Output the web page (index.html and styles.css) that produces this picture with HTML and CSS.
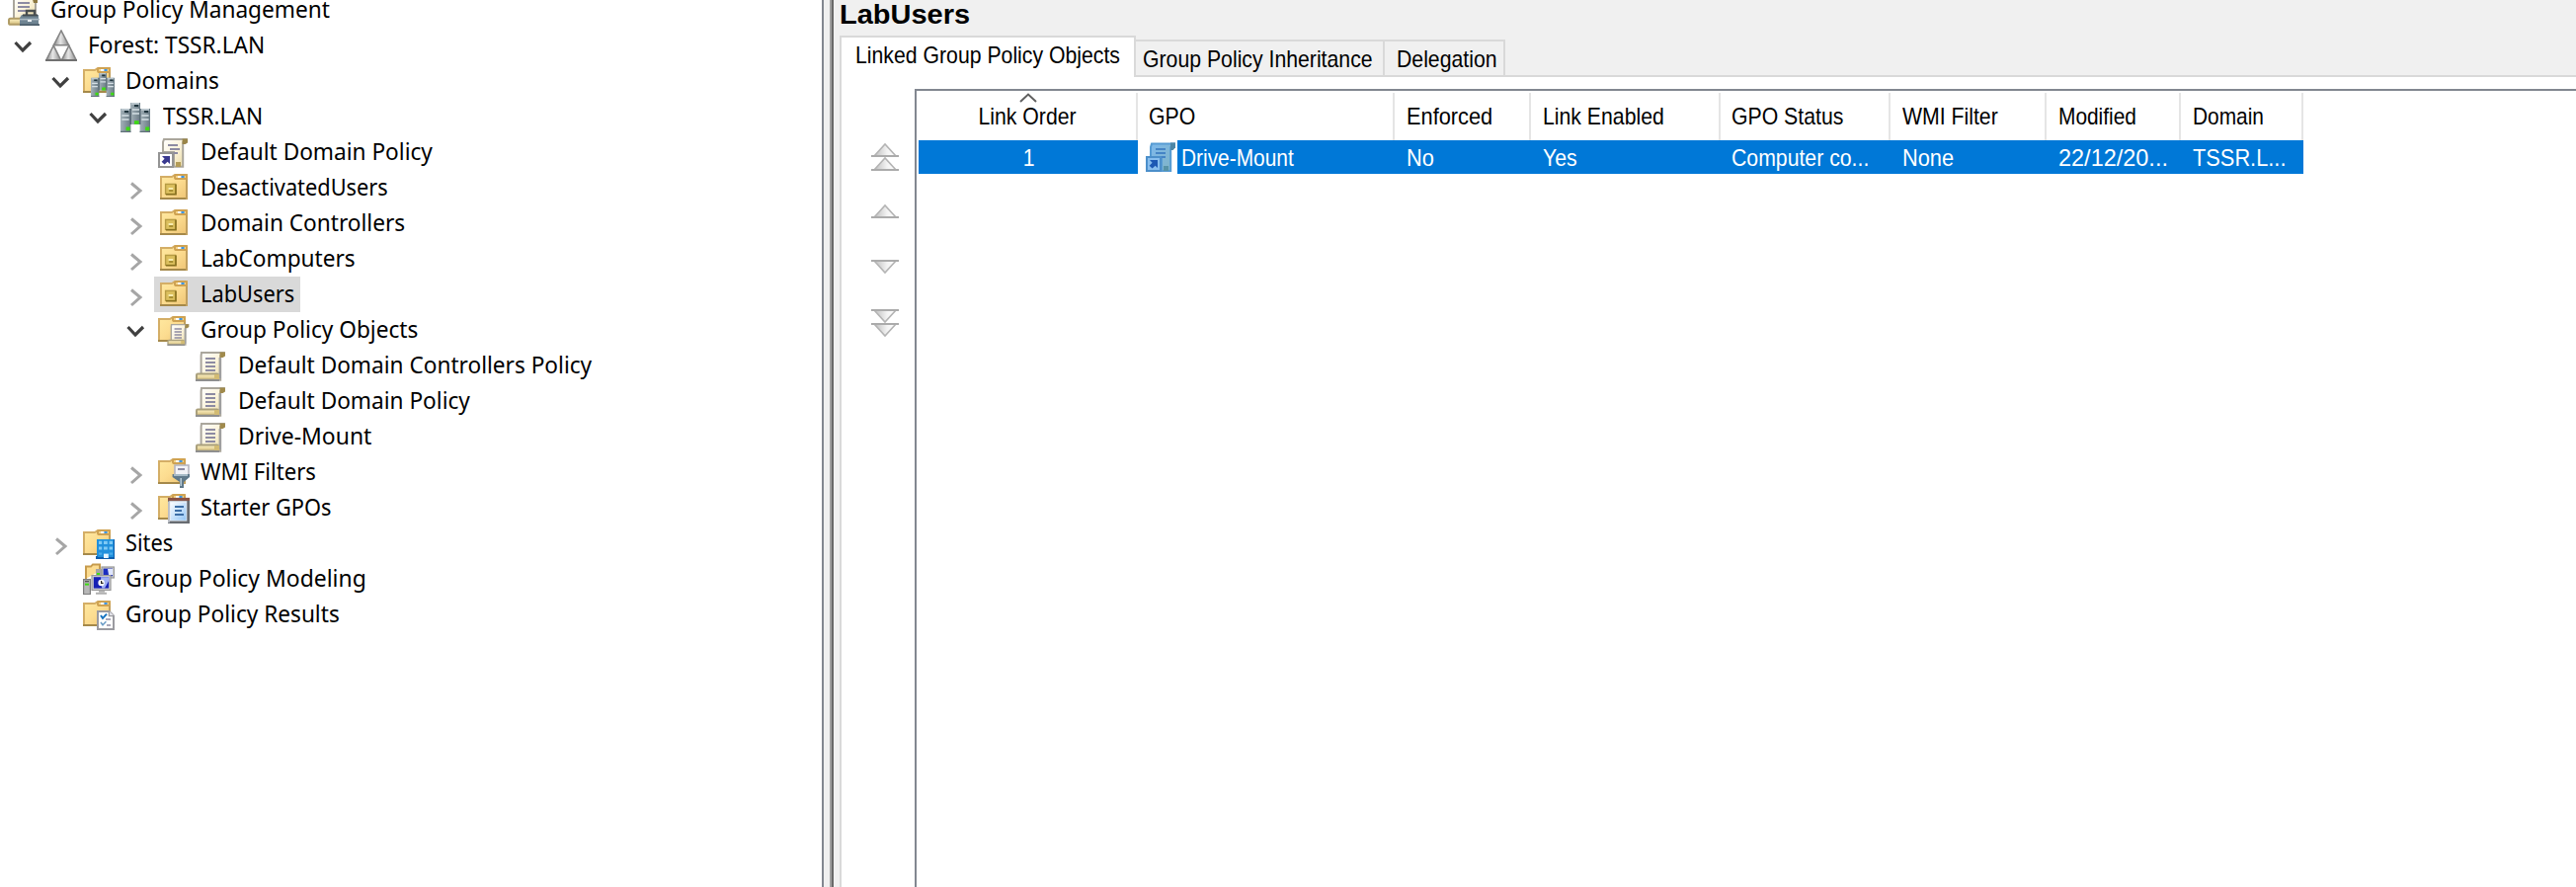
FILE: index.html
```
<!DOCTYPE html>
<html lang="en">
<head>
<meta charset="utf-8">
<title>Group Policy Management</title>
<link rel="stylesheet" href="styles.css">
</head>
<body>
<svg class="defs" width="0" height="0" aria-hidden="true">
  <defs>
    <linearGradient id="g-folder" x1="0" y1="0" x2="1" y2="1"><stop offset="0" stop-color="#ffe9a0"/><stop offset=".5" stop-color="#fcdc90"/><stop offset="1" stop-color="#eec474"/></linearGradient>
    <linearGradient id="g-paper" x1="0" y1="0" x2="1" y2="1"><stop offset="0" stop-color="#ffffff"/><stop offset=".5" stop-color="#fbf3da"/><stop offset="1" stop-color="#e8d8a0"/></linearGradient>
    <linearGradient id="g-roll" x1="0" y1="0" x2="0" y2="1"><stop offset="0" stop-color="#fff3c4"/><stop offset="1" stop-color="#d3bd7c"/></linearGradient>
    <linearGradient id="g-server" x1="0" y1="0" x2="1" y2="0"><stop offset="0" stop-color="#a3b1b8"/><stop offset="1" stop-color="#697a84"/></linearGradient>
    <linearGradient id="g-tri" x1="0" y1="0" x2="1" y2="0"><stop offset="0" stop-color="#858585"/><stop offset=".45" stop-color="#e6e6e6"/><stop offset="1" stop-color="#8c8c8c"/></linearGradient>
    <linearGradient id="g-btn" x1="0" y1="0" x2="1" y2="0"><stop offset="0" stop-color="#bdbdbd"/><stop offset=".6" stop-color="#f3f3f3"/><stop offset="1" stop-color="#ffffff"/></linearGradient>
    <linearGradient id="g-blue" x1="0" y1="0" x2="1" y2="1"><stop offset="0" stop-color="#7db8ec"/><stop offset="1" stop-color="#80b4c4"/></linearGradient>
    <linearGradient id="g-page" x1="0" y1="0" x2="1" y2="1"><stop offset="0" stop-color="#ffffff"/><stop offset="1" stop-color="#8fc3f5"/></linearGradient>

    <symbol id="folder" viewBox="0 0 16 16">
      <path d="M.5 2.5H6L7.5 1.5H13.5V13.5H.5Z" fill="url(#g-folder)" stroke="#d4ae66"/>
      <path d="M0 13.5H14" stroke="#a5894a"/>
      <path d="M13.5 3V14" stroke="#c09f5e"/>
      <rect x="7.5" y="1.5" width="6" height="2" rx=".8" fill="#f5d58a" stroke="#cfa252"/>
      <path d="M9 2.5H11" stroke="#fff"/><path d="M10.7 2.5H12.3" stroke="#3e96e4"/>
    </symbol>
    <symbol id="scroll" viewBox="0 0 16 16">
      <path d="M3 1.5H14L12.6 3V15.4H2.8V12L2.8 3Z" fill="url(#g-paper)" stroke="#aaa69c"/>
      <path d="M12.4 4V14.5" stroke="#9f9f9f" stroke-width="1.2"/>
      <path d="M12.3 1.2H15V3.2L13.8 4H12.3Z" fill="#a08a4c"/>
      <path d="M5 4.5H10M5 6.5H10M5 8.5H10M5 10.5H10" stroke="#8d8ba2"/>
      <rect x=".5" y="12.3" width="11" height="3" rx=".6" fill="url(#g-roll)" stroke="#aaa07c"/>
      <path d="M9.5 12.5V15H12V12.5Z" fill="#d2bb73"/>
      <path d="M0 15.5H12" stroke="#8f8f8f"/>
    </symbol>
    <symbol id="servers" viewBox="0 0 16 16">
      <rect x="5" y="1" width="5" height="11" fill="url(#g-server)"/>
      <rect x="0" y="4" width="5.2" height="12" fill="url(#g-server)"/>
      <rect x="9.8" y="4" width="5.2" height="12" fill="url(#g-server)"/>
      <path d="M5.5 1.5H9.5M.5 4.5H4.5M10.5 4.5H14.5" stroke="#b9c5cc"/>
      <path d="M7 2.5H9M2 5.5H4M12 5.5H14" stroke="#1f343d"/>
      <path d="M6 4.5H9.5M6 6.5H9.5M.7 7.5H4.3M.7 9.5H4.3M10.7 7.5H14.3M10.7 9.5H14.3" stroke="#d5dfe5" stroke-width=".8"/>
      <path d="M5.1 4V12M9.9 4V12" stroke="#566772" stroke-width=".7"/>
      <path d="M7 11H9.3M2.8 14.2H4.8M12.6 14.2H14.6" stroke="#3ddb12" stroke-width="1.8"/>
      <path d="M0 15.7H5.2M9.8 15.7H15" stroke="#60707a" stroke-width=".6"/>
    </symbol>

    <symbol id="i-root" viewBox="0 0 16 16">
      <path d="M3 1.5H14V13H3Z" fill="url(#g-paper)" stroke="#aaa69c"/>
      <path d="M12 1H15V4.5H13Z" fill="#8d7840"/>
      <path d="M5 4.5H11M5 6.5H11M5 8.5H9" stroke="#8d8ba2"/>
      <rect x=".5" y="12.4" width="8" height="3" rx=".8" fill="url(#g-roll)" stroke="#b09c66"/>
      <path d="M9.5 10.5V8.5H13.5V10.5" fill="none" stroke="#4a4e50" stroke-width="1.2"/>
      <path d="M7 10.5H15.5V16H6V12Z" fill="#6f8492"/>
      <path d="M7.5 10.7H15" stroke="#454c50"/>
      <path d="M6 12.8H16" stroke="#aab9c2" stroke-width=".8"/>
      <path d="M10 13.5H12" stroke="#e8eef2"/>
      <path d="M6 15.6H16" stroke="#4e606c"/>
    </symbol>
    <symbol id="i-forest" viewBox="0 0 16 16">
      <path d="M8 .5 11.8 7.9H4.2Z" fill="url(#g-tri)" stroke="#858585" stroke-width=".8"/>
      <path d="M4.1 8.1 7.8 15.5H.4Z" fill="url(#g-tri)" stroke="#858585" stroke-width=".8"/>
      <path d="M11.9 8.1 15.6 15.5H8.2Z" fill="url(#g-tri)" stroke="#858585" stroke-width=".8"/>
      <path d="M0 15.5H16" stroke="#707070"/>
    </symbol>
    <symbol id="i-domains" viewBox="0 0 16 16">
      <use href="#folder" width="16" height="16"/><use href="#servers" x="4" y="3.2" width="12.8" height="12.8"/>
    </symbol>
    <symbol id="i-link" viewBox="0 0 16 16">
      <path d="M3 1.5H14L12.6 3V15.4H8V8H2.5V3Z" fill="url(#g-paper)" stroke="#aaa69c"/>
      <path d="M12.3 1.2H15V3.2L13.8 4H12.3Z" fill="#9a8549"/>
      <path d="M5 4.5H10M6 6.5H11M6 8.5H10" stroke="#8d8ba2"/>
      <path d="M9 13H11.5V15.5H9Z" fill="#b39c58"/>
      <rect x=".5" y="8.5" width="7" height="7" fill="#fff" stroke="#949494"/>
      <path d="M2 10H6V14L4.8 12.9 3.3 14.3 1.8 12.9 3.3 11.4Z" fill="#39398f"/>
    </symbol>
    <symbol id="i-link-selected" viewBox="0 0 16 16">
      <path d="M3 .8H14L12.6 2.5V14.5H8V7.5H2.5V2.5Z" fill="url(#g-blue)" stroke="#569bd3"/>
      <path d="M12.5 .3H15V2.6L13.8 4H12.5Z" fill="#4c86a6"/>
      <path d="M5 3.5H10M5 5.5H10M6 7.5H10" stroke="#4584c5"/>
      <path d="M9 12H11.5V14.5H9Z" fill="#5793a6"/>
      <rect x=".5" y="7.5" width="7" height="7" fill="#88beee" stroke="#4c8fca"/>
      <path d="M2 9H6V13L4.8 11.9 3.3 13.3 1.8 11.9 3.3 10.4Z" fill="#1c58b4"/>
    </symbol>
    <symbol id="i-ou" viewBox="0 0 16 16">
      <use href="#folder" x="1" width="16" height="16"/>
      <rect x="3.8" y="6.2" width="5" height="5" fill="#dcc05e" stroke="#b79c44" stroke-width=".7"/>
      <path d="M4 11.4H9V6.2" fill="none" stroke="#87701e" stroke-width=".8"/>
      <path d="M5.3 8.5H7.6" stroke="#f7ebae"/><path d="M5.6 9.5H7.6" stroke="#917a20" stroke-width=".7"/>
    </symbol>
    <symbol id="i-gpo-folder" viewBox="0 0 16 16">
      <use href="#folder" width="16" height="16"/><use href="#scroll" x="4.6" y="4.2" width="11.8" height="11.8"/>
    </symbol>
    <symbol id="i-wmi" viewBox="0 0 16 16">
      <use href="#folder" width="16" height="16"/>
      <rect x="8.5" y="4.5" width="7" height="5" fill="#f2f2f6" stroke="#b5b5c0" stroke-width=".8"/>
      <path d="M10 6.5H13.5" stroke="#8d8ba2"/>
      <path d="M7.3 9H16V10.5L13 13V16H11V13L7.3 10.5Z" fill="#60798a"/>
      <path d="M8 9.5H15" stroke="#a7bac6"/><path d="M11.6 11V15" stroke="#b9cad4" stroke-width=".8"/>
    </symbol>
    <symbol id="i-starter" viewBox="0 0 16 16">
      <use href="#folder" width="16" height="16"/>
      <rect x="5" y="3" width="11" height="13" fill="#7c8288"/>
      <path d="M5 3.7H16" stroke="#8a5344" stroke-width="1.5"/>
      <rect x="6" y="5" width="8.6" height="9.7" fill="url(#g-page)" stroke="#e8eef5" stroke-width=".7"/>
      <path d="M8.5 7.5H13M8.5 9.5H12M8.5 11.5H13" stroke="#3c6ea6"/>
      <path d="M5.4 5V15.5" stroke="#b9bdc4" stroke-width=".8"/>
      <path d="M15.3 4.5V15.4H6" fill="none" stroke="#686c72" stroke-width="1.3"/>
    </symbol>
    <symbol id="i-sites" viewBox="0 0 16 16">
      <use href="#folder" width="16" height="16"/>
      <rect x="7" y="6" width="9" height="10" fill="#2190dc"/>
      <path d="M8 7.7H9.6M10.5 7.7H12.4M13.3 7.7H15M8 10.5H9.6M10.5 10.5H12.4M13.3 10.5H15" stroke="#7fcaf5" stroke-width="1.6"/>
      <path d="M8 13.3H9.6M13.3 13.3H15" stroke="#4aabea" stroke-width="1.2"/>
      <path d="M7 14.5V15.5H16V6" fill="none" stroke="#0e5fae"/>
      <rect x="10.5" y="13.3" width="2.4" height="2.2" fill="#e4f5ff"/>
    </symbol>
    <symbol id="i-modeling" viewBox="0 0 16 16">
      <path d="M1.5 8V1.8H4L5 .7H8.5V4" fill="#fcdc90" stroke="#c79c4e"/>
      <rect x="6.5" y="3" width="3" height="4" fill="#a5a5a5"/><path d="M7 5.5H8.5" stroke="#3ddb12"/>
      <rect x="9.5" y="2" width="6.3" height="5.5" fill="#c9c9c9" stroke="#999" stroke-width=".6"/>
      <rect x="10.3" y="2.8" width="4.7" height="3.8" fill="#1c2ec0"/><path d="M12.5 3H15V6H13Z" fill="#dfe6ff"/>
      <rect x="4.5" y="6.3" width="9.5" height="7.4" fill="#d0d0d4" stroke="#999" stroke-width=".6"/>
      <rect x="5.4" y="7.1" width="7.7" height="5.7" fill="#1620b4"/>
      <path d="M9 7.1H13.1V9L11 12.8H9.6Z" fill="#9fb0f4"/>
      <circle cx="9.3" cy="10" r="1.6" fill="#fff"/><path d="M9.3 9V10.2H10.3" fill="none" stroke="#222" stroke-width=".6"/>
      <rect x=".3" y="8.3" width="3.4" height="7.5" fill="#b8b8b8" stroke="#7e7e7e" stroke-width=".6"/>
      <path d="M1 10.8H3" stroke="#3ddb12"/><path d="M1 9.3H3" stroke="#555" stroke-width=".7"/>
      <path d="M8 14.3H11M6.5 15.4H12" stroke="#b0b0b0"/>
    </symbol>
    <symbol id="i-results" viewBox="0 0 16 16">
      <use href="#folder" width="16" height="16"/>
      <path d="M7.5 6.5H13.3L15.5 8.7V15.5H7.5Z" fill="#fff" stroke="#9a9aa0"/>
      <path d="M13.2 6.3V8.8H15.7" fill="#e4e4ea" stroke="#9a9aa0" stroke-width=".7"/>
      <path d="M9 8.5 10 10 12 7.8" fill="none" stroke="#1773c0" stroke-width="1"/>
      <path d="M9 12 10 13.4 11.7 11.6" fill="none" stroke="#6f9fc8" stroke-width=".8"/>
      <path d="M11.5 10.5H14M12 13.5H14" stroke="#8d8ba2" stroke-width=".8"/>
    </symbol>

    <symbol id="c-open" viewBox="0 0 38 36"><path d="M7.5 15 15 23 23 15" fill="none" stroke="#404040" stroke-width="3.2"/></symbol>
    <symbol id="c-closed" viewBox="0 0 38 36"><path d="M11 13.5 20 21 11 29" fill="none" stroke="#a6a6a6" stroke-width="3"/></symbol>
    <symbol id="tri-up" viewBox="0 0 28 16"><path d="M3 14 14 2 25 14Z" fill="url(#g-btn)" stroke="#b4b4b4" stroke-width="1.6"/><path d="M0 14H28" stroke="#ababab" stroke-width="2"/></symbol>
    <symbol id="tri-down" viewBox="0 0 28 16"><path d="M3 2 14 14 25 2Z" fill="url(#g-btn)" stroke="#b4b4b4" stroke-width="1.6"/><path d="M0 2H28" stroke="#ababab" stroke-width="2"/></symbol>
  </defs>
</svg>

<div class="window">
  <nav class="tree">
    <div class="row root"><div class="node"><svg class="icon"><use href="#i-root"/></svg><span class="label">Group Policy Management</span></div></div>
    <div class="row l1"><svg class="chev"><use href="#c-open"/></svg><div class="node"><svg class="icon"><use href="#i-forest"/></svg><span class="label">Forest: TSSR.LAN</span></div></div>
    <div class="row l2"><svg class="chev"><use href="#c-open"/></svg><div class="node"><svg class="icon"><use href="#i-domains"/></svg><span class="label">Domains</span></div></div>
    <div class="row l3"><svg class="chev"><use href="#c-open"/></svg><div class="node"><svg class="icon"><use href="#servers"/></svg><span class="label">TSSR.LAN</span></div></div>
    <div class="row l4"><span class="chev"></span><div class="node"><svg class="icon"><use href="#i-link"/></svg><span class="label">Default Domain Policy</span></div></div>
    <div class="row l4"><svg class="chev"><use href="#c-closed"/></svg><div class="node"><svg class="icon"><use href="#i-ou"/></svg><span class="label fit-91">DesactivatedUsers</span></div></div>
    <div class="row l4"><svg class="chev"><use href="#c-closed"/></svg><div class="node"><svg class="icon"><use href="#i-ou"/></svg><span class="label">Domain Controllers</span></div></div>
    <div class="row l4"><svg class="chev"><use href="#c-closed"/></svg><div class="node"><svg class="icon"><use href="#i-ou"/></svg><span class="label">LabComputers</span></div></div>
    <div class="row l4"><svg class="chev"><use href="#c-closed"/></svg><div class="node selected"><svg class="icon"><use href="#i-ou"/></svg><span class="label fit-91">LabUsers</span></div></div>
    <div class="row l4"><svg class="chev"><use href="#c-open"/></svg><div class="node"><svg class="icon"><use href="#i-gpo-folder"/></svg><span class="label">Group Policy Objects</span></div></div>
    <div class="row l5"><span class="chev"></span><div class="node"><svg class="icon"><use href="#scroll"/></svg><span class="label">Default Domain Controllers Policy</span></div></div>
    <div class="row l5"><span class="chev"></span><div class="node"><svg class="icon"><use href="#scroll"/></svg><span class="label">Default Domain Policy</span></div></div>
    <div class="row l5"><span class="chev"></span><div class="node"><svg class="icon"><use href="#scroll"/></svg><span class="label fit-95">Drive-Mount</span></div></div>
    <div class="row l4"><svg class="chev"><use href="#c-closed"/></svg><div class="node"><svg class="icon"><use href="#i-wmi"/></svg><span class="label fit-92">WMI Filters</span></div></div>
    <div class="row l4"><svg class="chev"><use href="#c-closed"/></svg><div class="node"><svg class="icon"><use href="#i-starter"/></svg><span class="label fit-91">Starter GPOs</span></div></div>
    <div class="row l2"><svg class="chev"><use href="#c-closed"/></svg><div class="node"><svg class="icon"><use href="#i-sites"/></svg><span class="label fit-91">Sites</span></div></div>
    <div class="row l2"><span class="chev"></span><div class="node"><svg class="icon"><use href="#i-modeling"/></svg><span class="label fit-95">Group Policy Modeling</span></div></div>
    <div class="row l2"><span class="chev"></span><div class="node"><svg class="icon"><use href="#i-results"/></svg><span class="label">Group Policy Results</span></div></div>
  </nav>
  <div class="splitter"></div>
  <main class="details">
    <h1 class="title"><span>LabUsers</span></h1>
    <div class="tabs">
      <div class="tab active"><span class="txt">Linked Group Policy Objects</span></div>
      <div class="tab inherit"><span class="txt">Group Policy Inheritance</span></div>
      <div class="tab deleg"><span class="txt">Delegation</span></div>
    </div>
    <div class="page">
      <div class="order">
        <svg class="dbl"><use href="#tri-up" width="28" height="16"/><use href="#tri-up" y="14" width="28" height="16"/></svg>
        <svg class="sgl up"><use href="#tri-up"/></svg>
        <svg class="sgl down"><use href="#tri-down"/></svg>
        <svg class="dbl last"><use href="#tri-down" width="28" height="16"/><use href="#tri-down" y="14" width="28" height="16"/></svg>
      </div>
      <div class="list">
        <div class="grid head">
          <div class="cell center"><svg class="sort" viewBox="0 0 18 10"><path d="M1 9 9 1.5 17 9" fill="none" stroke="#606060" stroke-width="2"/></svg><span class="txt">Link Order</span></div>
          <div class="cell gpo"><span class="txt">GPO</span></div>
          <div class="cell"><span class="txt fit-91">Enforced</span></div>
          <div class="cell"><span class="txt">Link Enabled</span></div>
          <div class="cell gpo"><span class="txt">GPO Status</span></div>
          <div class="cell"><span class="txt">WMI Filter</span></div>
          <div class="cell"><span class="txt fit-87">Modified</span></div>
          <div class="cell wide"><span class="txt fit-87">Domain</span></div>
        </div>
        <div class="grid item">
          <div class="cell center"><span class="txt">1</span></div>
          <div class="cell name"><span class="pic"><svg class="icon"><use href="#i-link-selected"/></svg></span><span class="txt fit-87">Drive-Mount</span></div>
          <div class="cell"><span class="txt fit-91">No</span></div>
          <div class="cell"><span class="txt">Yes</span></div>
          <div class="cell gpo"><span class="txt">Computer co...</span></div>
          <div class="cell"><span class="txt fit-91">None</span></div>
          <div class="cell"><span class="txt fit-98">22/12/20...</span></div>
          <div class="cell wide"><span class="txt fit-91">TSSR.L...</span></div>
        </div>
      </div>
    </div>
  </main>
</div>
</body>
</html>
```
FILE: styles.css
```
* { box-sizing: border-box; }
html, body { margin: 0; height: 100%; overflow: hidden; background: #fff; color: #000; }
.defs { display: block; height: 0; }
svg { display: block; flex: none; }

.window { display: flex; height: 898px; overflow: hidden; }

/* navigation tree */
.tree {
  flex: none; width: 834px; border-right: 2px solid #828790;
  font: 24px "Noto Sans", "Open Sans", sans-serif;
}
.row { display: flex; height: 36px; }
.root { margin-top: -8px; padding-left: 8px; }
.l1 { padding-left: 8px; }
.l2 { padding-left: 46px; }
.l3 { padding-left: 84px; }
.l4 { padding-left: 122px; }
.l5 { padding-left: 160px; }
.chev { flex: none; width: 38px; height: 36px; }
.node { display: flex; height: 36px; margin-left: -4px; padding-left: 4px; }
.root .node { margin-left: 0; padding-left: 0; }
.selected { flex: none; width: 148px; background: #d9d9d9; }
.icon { width: 32px; height: 32px; margin-top: 2px; }
.label {
  margin-left: 10.5px; line-height: 34px; white-space: pre;
  transform: scaleX(.943); transform-origin: left;
}

/* condensed and widened captions */
.fit-87 { transform: scaleX(.87) !important; }
.fit-91 { transform: scaleX(.908) !important; }
.fit-92 { transform: scaleX(.921) !important; }
.fit-95 { transform: scaleX(.955) !important; }
.fit-98 { transform: scaleX(.978) !important; }

.splitter {
  flex: none; width: 10px; background: #f0f0f0;
  border-right: 2px solid #696969; box-shadow: inset -2px 0 #a0a0a0;
}

/* details pane */
.details {
  flex: 1; min-width: 0; display: flex; flex-direction: column;
  padding-left: 6px; background: #f0f0f0;
  font: 24px "Liberation Sans", Arial, sans-serif;
}
.title { margin: 0; height: 36px; font-size: 28px; line-height: 29px; font-weight: bold; }
.title span { display: inline-block; transform: scaleX(1.035); transform-origin: left; }
.txt { display: inline-block; white-space: pre; transform: scaleX(.885); transform-origin: left; }

.tabs { display: flex; align-items: flex-end; height: 42px; box-shadow: inset 0 -2px #d9d9d9; }
.tab { height: 38px; border: 2px solid #d9d9d9; border-left: 0; line-height: 35px; overflow: hidden; }
.tab.active { width: 300px; height: 42px; padding-left: 14px; border-left: 2px solid #d9d9d9; border-bottom: 0; background: #fff; line-height: 36px; }
.inherit { width: 252px; padding-left: 7px; }
.deleg { width: 122px; padding-left: 12px; }

.page { flex: 1; display: flex; padding-top: 12px; border-left: 2px solid #d9d9d9; background: #fff; }
.order { flex: none; width: 74px; padding: 54px 0 0 30px; }
.dbl { width: 28px; height: 30px; }
.sgl { width: 28px; height: 16px; }
.up { margin-top: 32px; }
.down { margin-top: 40px; }
.last { margin-top: 34px; }

.list { flex: 1; padding: 2px 0 0 2px; border: 2px solid #828790; border-width: 2px 0 0 2px; }
.grid { display: grid; grid-template-columns: 222px 260px 138px 192px 172px 158px 136px 124px; width: 1402px; }
.cell { padding-left: 12px; overflow: hidden; }
.gpo { padding-left: 11px; }
.center { position: relative; padding: 0 0 0 1px; text-align: center; }
.center .txt { transform-origin: center; }
.head { height: 48px; line-height: 48px; }
.head .cell { border-right: 2px solid #e5e5e5; }
.sort { position: absolute; left: 102px; top: 0; width: 18px; height: 10px; }
.item { height: 34px; line-height: 35px; background: #0078d7; color: #fff; }
.name { display: flex; padding: 0; }
.pic { flex: none; width: 40px; margin-right: 4px; padding-left: 8px; background: #fff; }
```
